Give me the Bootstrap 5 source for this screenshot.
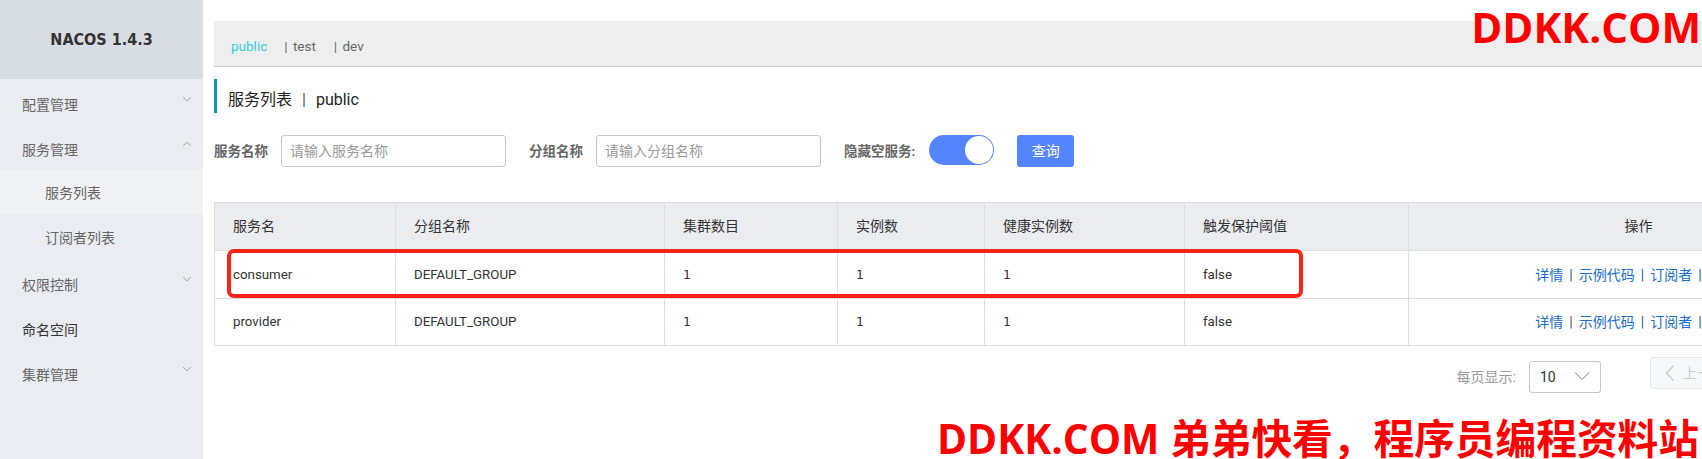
<!DOCTYPE html>
<html lang="zh-CN">
<head>
    <meta charset="UTF-8">
    <title>Nacos</title>
    <link rel="stylesheet" href="https://cdn.jsdelivr.net/npm/bootstrap@5.3.0/dist/css/bootstrap.min.css">
    <style>
        html, body { height: 459px; overflow: hidden; }
        body { font-family: Roboto, "Noto Sans CJK SC", sans-serif; font-size: 14px; color: #333; background: #fff; position: relative; }
        .side { width: 203px; height: 459px; background: #e9ecf1; flex-shrink: 0; }
        .side-head { height: 79px; padding-top: 1px; background: #d8dce3; font-family: "DejaVu Sans Condensed", "DejaVu Sans", sans-serif; font-weight: 700; font-size: 16px; color: #333; }
        .side-item { height: 45px; padding: 7px 11px 0 22px; color: #666; }
        .side-item.dark { color: #333; }
        .side-sub { padding-left: 45px; padding-top: 4px; }
        .side-sub.on { background: #f0f2f5; }
        .chev { width: 10px; height: 6px; margin-top: -12px; fill: none; stroke: #888; stroke-width: 1; }
        .main-area { width: 1654px; padding: 21px 0 0 11px; box-sizing: content-box; flex-shrink: 0; }
        .tab-bar { height: 46px; background: #eeeeee; border-bottom: 1px solid #cccccc; padding: 5px 0 0 17px; font-size: 13.5px; color: #666; }
        .tab-bar .on { color: #33cde5; margin-right: 17px; }
        .tab-bar .sep { color: #5b6b7b; margin-right: 2px; }
        .tab-bar .tab { margin-right: 18px; }
        .page-title { height: 34px; margin-top: 12px; border-left: 3px solid #09c; padding: 7px 0 0 11px; font-size: 16px; color: #222; }
        .title-sep { margin: 0 10px; color: #555; }
        .filter-row { height: 32px; margin-top: 22px; }
        .filter-label { font-weight: 700; color: #666; font-size: 13.5px; white-space: nowrap; }
        .gap-a { margin-right: 13px; }
        .gap-b { margin-left: 23px; }
        .filter-input { width: 225px; height: 32px; border: 1px solid #c4c6cf; border-radius: 3px; padding: 0 8px; font-size: 14px; box-shadow: none; }
        .filter-input::placeholder { color: #999; }
        .sw-track { width: 65px; height: 30px; border-radius: 15px; background: #5584ff; padding: 1px; margin: 0 0 2px 14px; }
        .sw-knob { width: 28px; height: 28px; border-radius: 50%; background: #fff; }
        .query-btn { width: 57px; height: 32px; margin-left: 23px; background: #5584ff; border: 0; border-radius: 3px; color: #fff; font-size: 14px; padding: 0; }
        .svc-table { table-layout: fixed; width: 1654px; margin: 35px 0 0; font-size: 13.3px; color: #333; border-color: #dcdee3; }
        .svc-table th { height: 48px; background: #ebecf0; font-weight: 400; font-size: 14px; padding: 0 18px; vertical-align: middle; color: #333; }
        .svc-table td { height: 47px; padding: 0 18px; vertical-align: middle; }
        .svc-table tbody tr:first-child td { height: 48px; padding-top: 1px; }
        .svc-table .num-cell { font-family: "DejaVu Sans", sans-serif; font-size: 12.5px; color: #3a2a3a; }
        .w1 { width: 181px; } .w2 { width: 269px; } .w3 { width: 173px; } .w4 { width: 147px; }
        .w5 { width: 200px; } .w6 { width: 224px; } .w7 { width: 460px; }
        .svc-table .act-cell { font-size: 14px; color: #2f5a8f; padding-right: 24px; }
        .act-cell a { color: #1a6dcc; text-decoration: none; }
        .act-sep { margin: 0 6px; }
        .mark-box { position: absolute; left: 13px; top: 47px; width: 1076px; height: 49px; border: 4px solid #ff2317; border-radius: 7px; pointer-events: none; }
        .pager { margin-top: 15px; height: 32px; }
        .pager-label { color: #999; font-size: 14px; margin-right: 13px; }
        .pager-select { width: 72px; height: 32px; border: 1px solid #c4c6cf; border-radius: 3px; padding: 0 10px; margin-right: 49px; }
        .pager-select .chev { width: 16px; height: 10px; margin-top: -3px; stroke: #777; }
        .pager-prev { width: 218px; height: 32px; margin-top: -8px; background: #f7f8fa; border: 1px solid #e6e7eb; border-radius: 3px; color: #ccc; padding-left: 14px; }
        .pager-prev .chev { width: 10px; height: 18px; margin-top: 0; stroke: #ccc; stroke-width: 1.5; }
        .wm { position: absolute; color: #f00; font-family: "Open Sans", "Noto Sans CJK SC", sans-serif; font-weight: 700; line-height: 1; white-space: nowrap; }
        .wm-top { right: 1px; top: 6px; font-size: 42px; }
        .wm-bottom { right: 3px; top: 418px; font-size: 40.7px; }
    </style>
</head>
<body>
    <div class="d-flex">
        <div class="side">
            <div class="side-head d-flex align-items-center justify-content-center">NACOS 1.4.3</div>
            <div class="side-item d-flex align-items-center justify-content-between">配置管理
                <svg class="chev" viewBox="0 0 12 8"><path d="M1 1.5l5 5 5-5"/></svg></div>
            <div class="side-item d-flex align-items-center justify-content-between">服务管理
                <svg class="chev" viewBox="0 0 12 8"><path d="M1 6.5l5-5 5 5"/></svg></div>
            <div class="side-item side-sub on d-flex align-items-center">服务列表</div>
            <div class="side-item side-sub d-flex align-items-center">订阅者列表</div>
            <div class="side-item d-flex align-items-center justify-content-between">权限控制
                <svg class="chev" viewBox="0 0 12 8"><path d="M1 1.5l5 5 5-5"/></svg></div>
            <div class="side-item dark d-flex align-items-center">命名空间</div>
            <div class="side-item d-flex align-items-center justify-content-between">集群管理
                <svg class="chev" viewBox="0 0 12 8"><path d="M1 1.5l5 5 5-5"/></svg></div>
        </div>

        <div class="main-area">
            <div class="tab-bar d-flex align-items-center">
                <span class="on">public</span>
                <span class="tab"><span class="sep">|</span> test</span>
                <span class="tab"><span class="sep">|</span> dev</span>
            </div>

            <div class="page-title d-flex align-items-center">服务列表<span class="title-sep">|</span>public</div>

            <div class="filter-row d-flex align-items-center">
                <span class="filter-label gap-a">服务名称</span>
                <input type="text" class="form-control filter-input" placeholder="请输入服务名称">
                <span class="filter-label gap-b gap-a">分组名称</span>
                <input type="text" class="form-control filter-input" placeholder="请输入分组名称">
                <span class="filter-label gap-b">隐藏空服务:</span>
                <div class="sw-track d-flex justify-content-end"><div class="sw-knob"></div></div>
                <button type="button" class="btn query-btn">查询</button>
            </div>

            <div class="position-relative">
                <table class="table table-bordered svc-table">
                    <colgroup>
                        <col class="w1"><col class="w2"><col class="w3"><col class="w4"><col class="w5"><col class="w6"><col class="w7">
                    </colgroup>
                    <thead>
                        <tr>
                            <th>服务名</th>
                            <th>分组名称</th>
                            <th>集群数目</th>
                            <th>实例数</th>
                            <th>健康实例数</th>
                            <th>触发保护阈值</th>
                            <th class="text-center">操作</th>
                        </tr>
                    </thead>
                    <tbody>
                        <tr>
                            <td>consumer</td><td>DEFAULT_GROUP</td><td class="num-cell">1</td><td class="num-cell">1</td><td class="num-cell">1</td><td>false</td>
                            <td class="act-cell text-center"><a href="#">详情</a><span class="act-sep">|</span><a href="#">示例代码</a><span class="act-sep">|</span><a href="#">订阅者</a><span class="act-sep">|</span><a href="#">删除</a></td>
                        </tr>
                        <tr>
                            <td>provider</td><td>DEFAULT_GROUP</td><td class="num-cell">1</td><td class="num-cell">1</td><td class="num-cell">1</td><td>false</td>
                            <td class="act-cell text-center"><a href="#">详情</a><span class="act-sep">|</span><a href="#">示例代码</a><span class="act-sep">|</span><a href="#">订阅者</a><span class="act-sep">|</span><a href="#">删除</a></td>
                        </tr>
                    </tbody>
                </table>
                <div class="mark-box"></div>
            </div>

            <div class="pager d-flex align-items-center justify-content-end">
                <span class="pager-label">每页显示:</span>
                <div class="pager-select d-flex align-items-center justify-content-between">10
                    <svg class="chev" viewBox="0 0 16 10"><path d="M1 1.5l7 7 7-7"/></svg></div>
                <div class="pager-prev d-flex align-items-center gap-2">
                    <svg class="chev" viewBox="0 0 10 18"><path d="M8.5 1.5L1.5 9l7 7.5"/></svg>上一页</div>
            </div>
        </div>
    </div>

    <div class="wm wm-top">DDKK.COM</div>
    <div class="wm wm-bottom">DDKK.COM 弟弟快看，程序员编程资料站</div>

    <script src="https://cdn.jsdelivr.net/npm/bootstrap@5.3.0/dist/js/bootstrap.bundle.min.js"></script>
</body>
</html>
